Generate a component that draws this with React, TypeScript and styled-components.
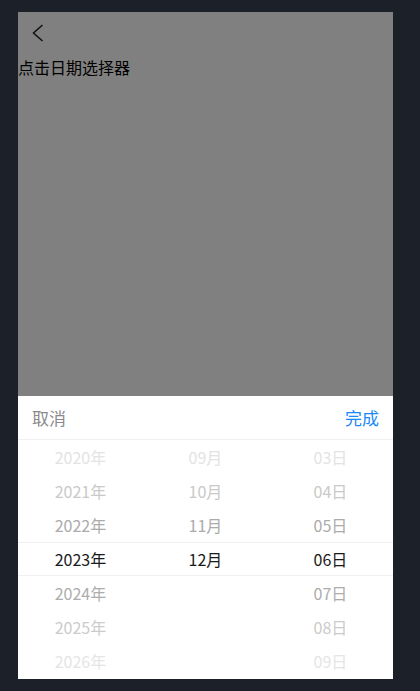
import React from "react";
import styled, { createGlobalStyle } from "styled-components";

const Global = createGlobalStyle`
  html, body { margin: 0; padding: 0; background: #1b2029; }
  body { font-family: "Noto Sans CJK SC", "Noto Sans", sans-serif; }
  #root { padding: 12px 0 0 18px; }
`;

const Screen = styled.div`
  width: 375px;
  height: 667px;
  background: #808080;
  display: flex;
  flex-direction: column;
  overflow: hidden;
`;

const NavBar = styled.div`
  height: 41px;
  display: flex;
  align-items: center;
  padding-left: 13px;
`;

const BackButton = styled.button`
  border: 0;
  background: none;
  padding: 0;
  display: flex;
  align-items: center;
  cursor: pointer;
`;

const Title = styled.div`
  font-size: 16px;
  line-height: 28px;
  color: #000;
`;

const Sheet = styled.div`
  margin-top: auto;
  background: #fff;
  height: 283px;
  display: flex;
  flex-direction: column;
`;

const Toolbar = styled.div`
  height: 44px;
  box-sizing: border-box;
  border-bottom: 1px solid #f0f0f0;
  display: flex;
  align-items: center;
  justify-content: space-between;
  padding: 0 14px;
`;

const ToolButton = styled.button<{ $primary?: boolean }>`
  border: 0;
  background: none;
  padding: 0;
  font-family: inherit;
  font-size: 17px;
  color: ${(p) => (p.$primary ? "#1989fa" : "#8a8a8a")};
  cursor: pointer;
`;

const Row = styled.div<{ $selected?: boolean }>`
  height: 34px;
  box-sizing: border-box;
  display: grid;
  grid-template-columns: repeat(3, 1fr);
  align-items: center;
  border-top: ${(p) => (p.$selected ? "1px solid #f0f0f0" : "0")};
  border-bottom: ${(p) => (p.$selected ? "1px solid #f0f0f0" : "0")};
`;

const colors = ["#e3e3e3", "#c9c9c9", "#ababab", "#1a1a1a", "#adadad", "#cbcbcb", "#e5e5e5"];

const Cell = styled.div<{ $level: number }>`
  text-align: center;
  font-size: 16px;
  color: ${(p) => colors[p.$level]};
`;

const rows = [
  ["2020年", "09月", "03日"],
  ["2021年", "10月", "04日"],
  ["2022年", "11月", "05日"],
  ["2023年", "12月", "06日"],
  ["2024年", "", "07日"],
  ["2025年", "", "08日"],
  ["2026年", "", "09日"],
];

export default function App() {
  return (
    <>
      <Global />
      <Screen>
        <NavBar>
          <BackButton aria-label="back">
            <svg width="14" height="20" viewBox="0 0 14 20">
              <path d="M11.5 2 L2.5 10 L11.5 18" fill="none" stroke="#141414" strokeWidth="1.6" />
            </svg>
          </BackButton>
        </NavBar>
        <Title>点击日期选择器</Title>
        <Sheet>
          <Toolbar>
            <ToolButton>取消</ToolButton>
            <ToolButton $primary>完成</ToolButton>
          </Toolbar>
          {rows.map((r, i) => (
            <Row key={i} $selected={i === 3}>
              {r.map((t, j) => (
                <Cell key={j} $level={i}>
                  {t}
                </Cell>
              ))}
            </Row>
          ))}
        </Sheet>
      </Screen>
    </>
  );
}
